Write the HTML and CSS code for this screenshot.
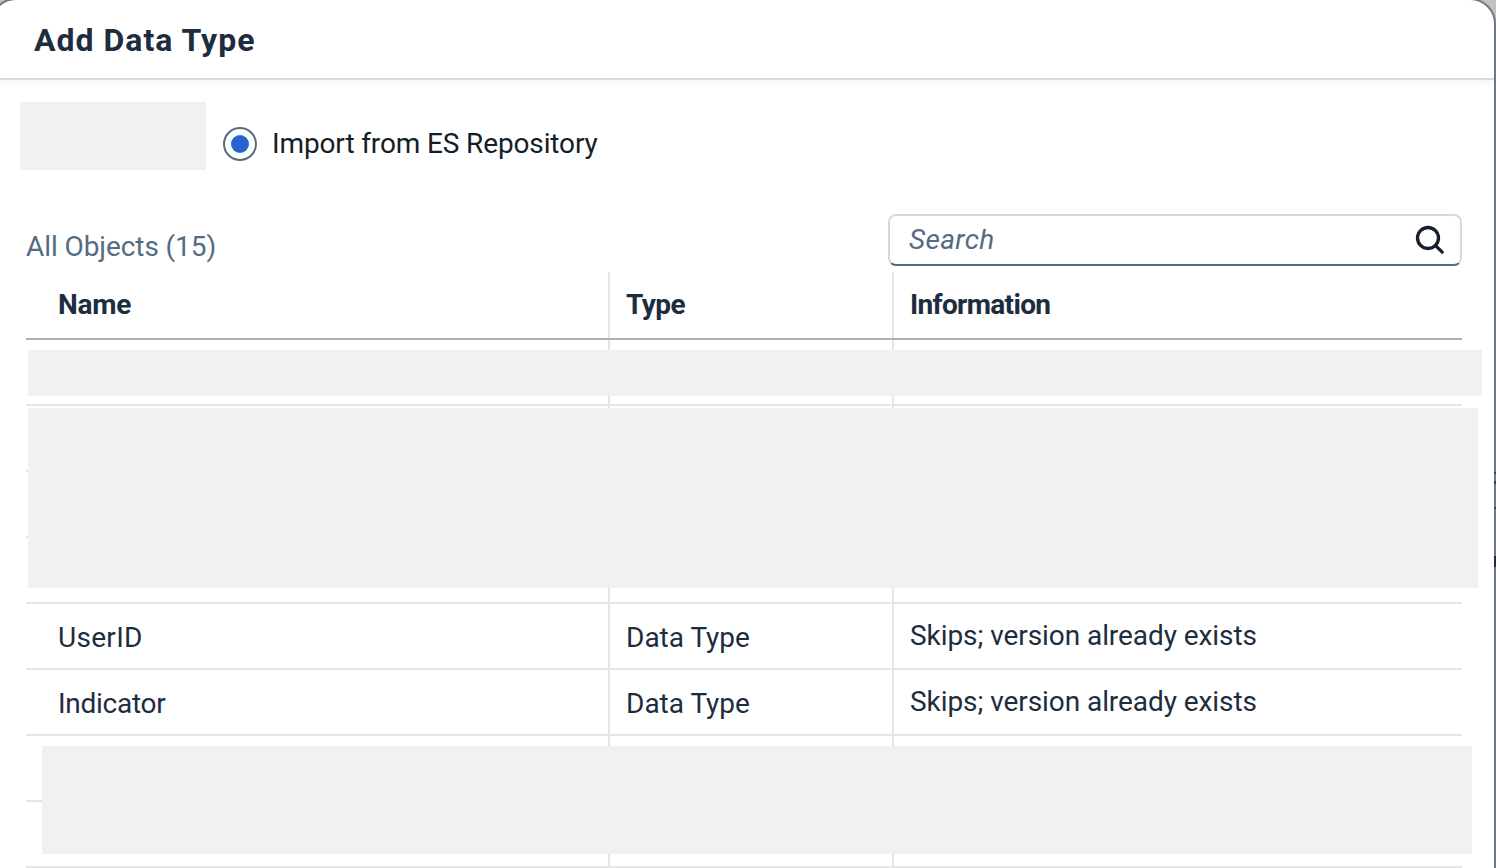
FILE: index.html
```
<!DOCTYPE html>
<html lang="en">
<head>
<meta charset="utf-8">
<title>Add Data Type</title>
<link rel="stylesheet" href="styles.css">
</head>
<body>
<main class="dialog">
  <header class="dialog-header"><h1 class="title">Add Data Type</h1></header>
  <section class="options">
    <div class="option-block"></div>
    <label class="radio-option"><span class="radio"></span><span class="radio-label">Import from ES Repository</span></label>
  </section>
  <section class="toolbar">
    <h2 class="count">All Objects (15)</h2>
    <div class="search">
      <span class="placeholder">Search</span>
      <svg class="search-icon" width="32" height="32" viewBox="0 0 32 32" fill="none" stroke="#16202d" stroke-width="3.3" stroke-linecap="round"><circle cx="14" cy="14" r="10.5"/><path d="M21.8 21.8L28.2 28.2"/></svg>
    </div>
  </section>
  <section class="table">
    <div class="row head"><div class="cell"><span class="name-head">Name</span></div><div class="cell"><span class="type-head">Type</span></div><div class="cell"><span class="info-head">Information</span></div></div>
    <div class="row"><div class="cell"></div><div class="cell"></div><div class="cell"></div></div>
    <div class="row"><div class="cell"></div><div class="cell"></div><div class="cell"></div></div>
    <div class="row"><div class="cell"></div><div class="cell"></div><div class="cell"></div></div>
    <div class="row"><div class="cell"></div><div class="cell"></div><div class="cell"></div></div>
    <div class="row"><div class="cell"><span class="user">UserID</span></div><div class="cell"><span class="dtype">Data Type</span></div><div class="cell info"><span class="skip">Skips; version already exists</span></div></div>
    <div class="row"><div class="cell"><span class="indicator">Indicator</span></div><div class="cell"><span class="dtype">Data Type</span></div><div class="cell info"><span class="skip">Skips; version already exists</span></div></div>
    <div class="row"><div class="cell"></div><div class="cell"></div><div class="cell"></div></div>
    <div class="row"><div class="cell"></div><div class="cell"></div><div class="cell"></div></div>
    <div class="cover cover-first"></div>
    <div class="cover cover-middle"></div>
    <div class="cover cover-last"></div>
  </section>
</main>
<div class="page-edge"><i class="mark m1"></i><i class="mark m2"></i><i class="mark m3"></i><i class="mark m4"></i></div>
</body>
</html>
```
FILE: styles.css
```
* { box-sizing: border-box; }
body { margin: 0; height: 868px; overflow: hidden; position: relative; background: #c1c1c1; font-family: Roboto, "Liberation Sans", sans-serif; font-size: 28px; color: #1d2d3e; }
.dialog { margin: -2px 0 0 -10px; width: 1506px; height: 900px; border: 2px solid #6f7984; border-radius: 26px; background: #fff; overflow: hidden; }
.dialog-header { height: 80px; padding-left: 42px; display: flex; align-items: center; border-bottom: 2px solid #d9d9d9; box-shadow: 0 2px 8px rgba(0,0,0,.06); }
.title { margin: 2px 0 0; font-size: 32px; line-height: 40px; font-weight: 700; letter-spacing: 1px; white-space: nowrap; }
.options { display: flex; height: 90px; padding: 22px 0 0 28px; }
.option-block { width: 186px; height: 68px; background: #f1f1f1; }
.radio-option { display: flex; align-items: center; height: 34px; margin: 25px 0 0 17px; color: #131e29; }
.radio { display: grid; place-items: center; width: 34px; height: 34px; border: 2px solid #556b82; border-radius: 50%; }
.radio::after { content: ""; width: 18px; height: 18px; border-radius: 50%; background: #2962d4; }
.radio-label { margin: 0 0 2px 15px; letter-spacing: -.13px; white-space: nowrap; }
.toolbar { display: flex; justify-content: space-between; height: 102px; padding: 44px 32px 0 34px; }
.count { margin: 16px 0 0; font-size: 28px; line-height: 34px; font-weight: 400; color: #556b82; letter-spacing: -.08px; white-space: nowrap; }
.search { display: flex; align-items: center; justify-content: space-between; width: 574px; height: 52px; padding: 0 14px 0 19px; border: 2px solid #d3d9df; border-bottom-color: #556b82; border-radius: 8px; }
.placeholder { margin-bottom: 2px; font-style: italic; color: #556b82; letter-spacing: .35px; }
.search-icon { flex: none; }
.table { position: relative; width: 1436px; margin-left: 34px; }
.row { display: grid; grid-template-columns: 584px 284px 568px; height: 66px; border-bottom: 2px solid #e5e5e5; }
.row.head { height: 68px; border-color: #a8b3bd; font-weight: 700; }
.cell { display: flex; align-items: center; padding: 2px 0 0 16px; border-right: 2px solid #e5e5e5; white-space: nowrap; }
.cell:first-child { padding-left: 32px; }
.cell:last-child { border-right: 0; }
.cell.info { padding-top: 0; padding-bottom: 2px; }
.head .cell { padding-top: 0; padding-bottom: 2px; }
.name-head { letter-spacing: -.25px; }
.type-head { letter-spacing: -.5px; }
.info-head { letter-spacing: -.66px; }
.user { letter-spacing: .3px; }
.indicator { letter-spacing: -.28px; }
.skip { letter-spacing: -.07px; }
.cover { position: absolute; background: #f1f1f1; }
.cover-first { left: 2px; top: 78px; width: 1454px; height: 46px; }
.cover-middle { left: 2px; top: 136px; width: 1450px; height: 180px; }
.cover-last { left: 16px; top: 474px; width: 1430px; height: 108px; }
.page-edge { position: absolute; right: 0; top: 28px; width: 2px; height: 840px; background: #6f7984; }
.mark { position: absolute; left: 0; width: 2px; height: 2px; background: #39434e; }
.m1 { top: 444px; }
.m2 { top: 453px; height: 3px; }
.m3 { top: 479px; }
.m4 { top: 528px; height: 11px; background: #222b36; }
```
